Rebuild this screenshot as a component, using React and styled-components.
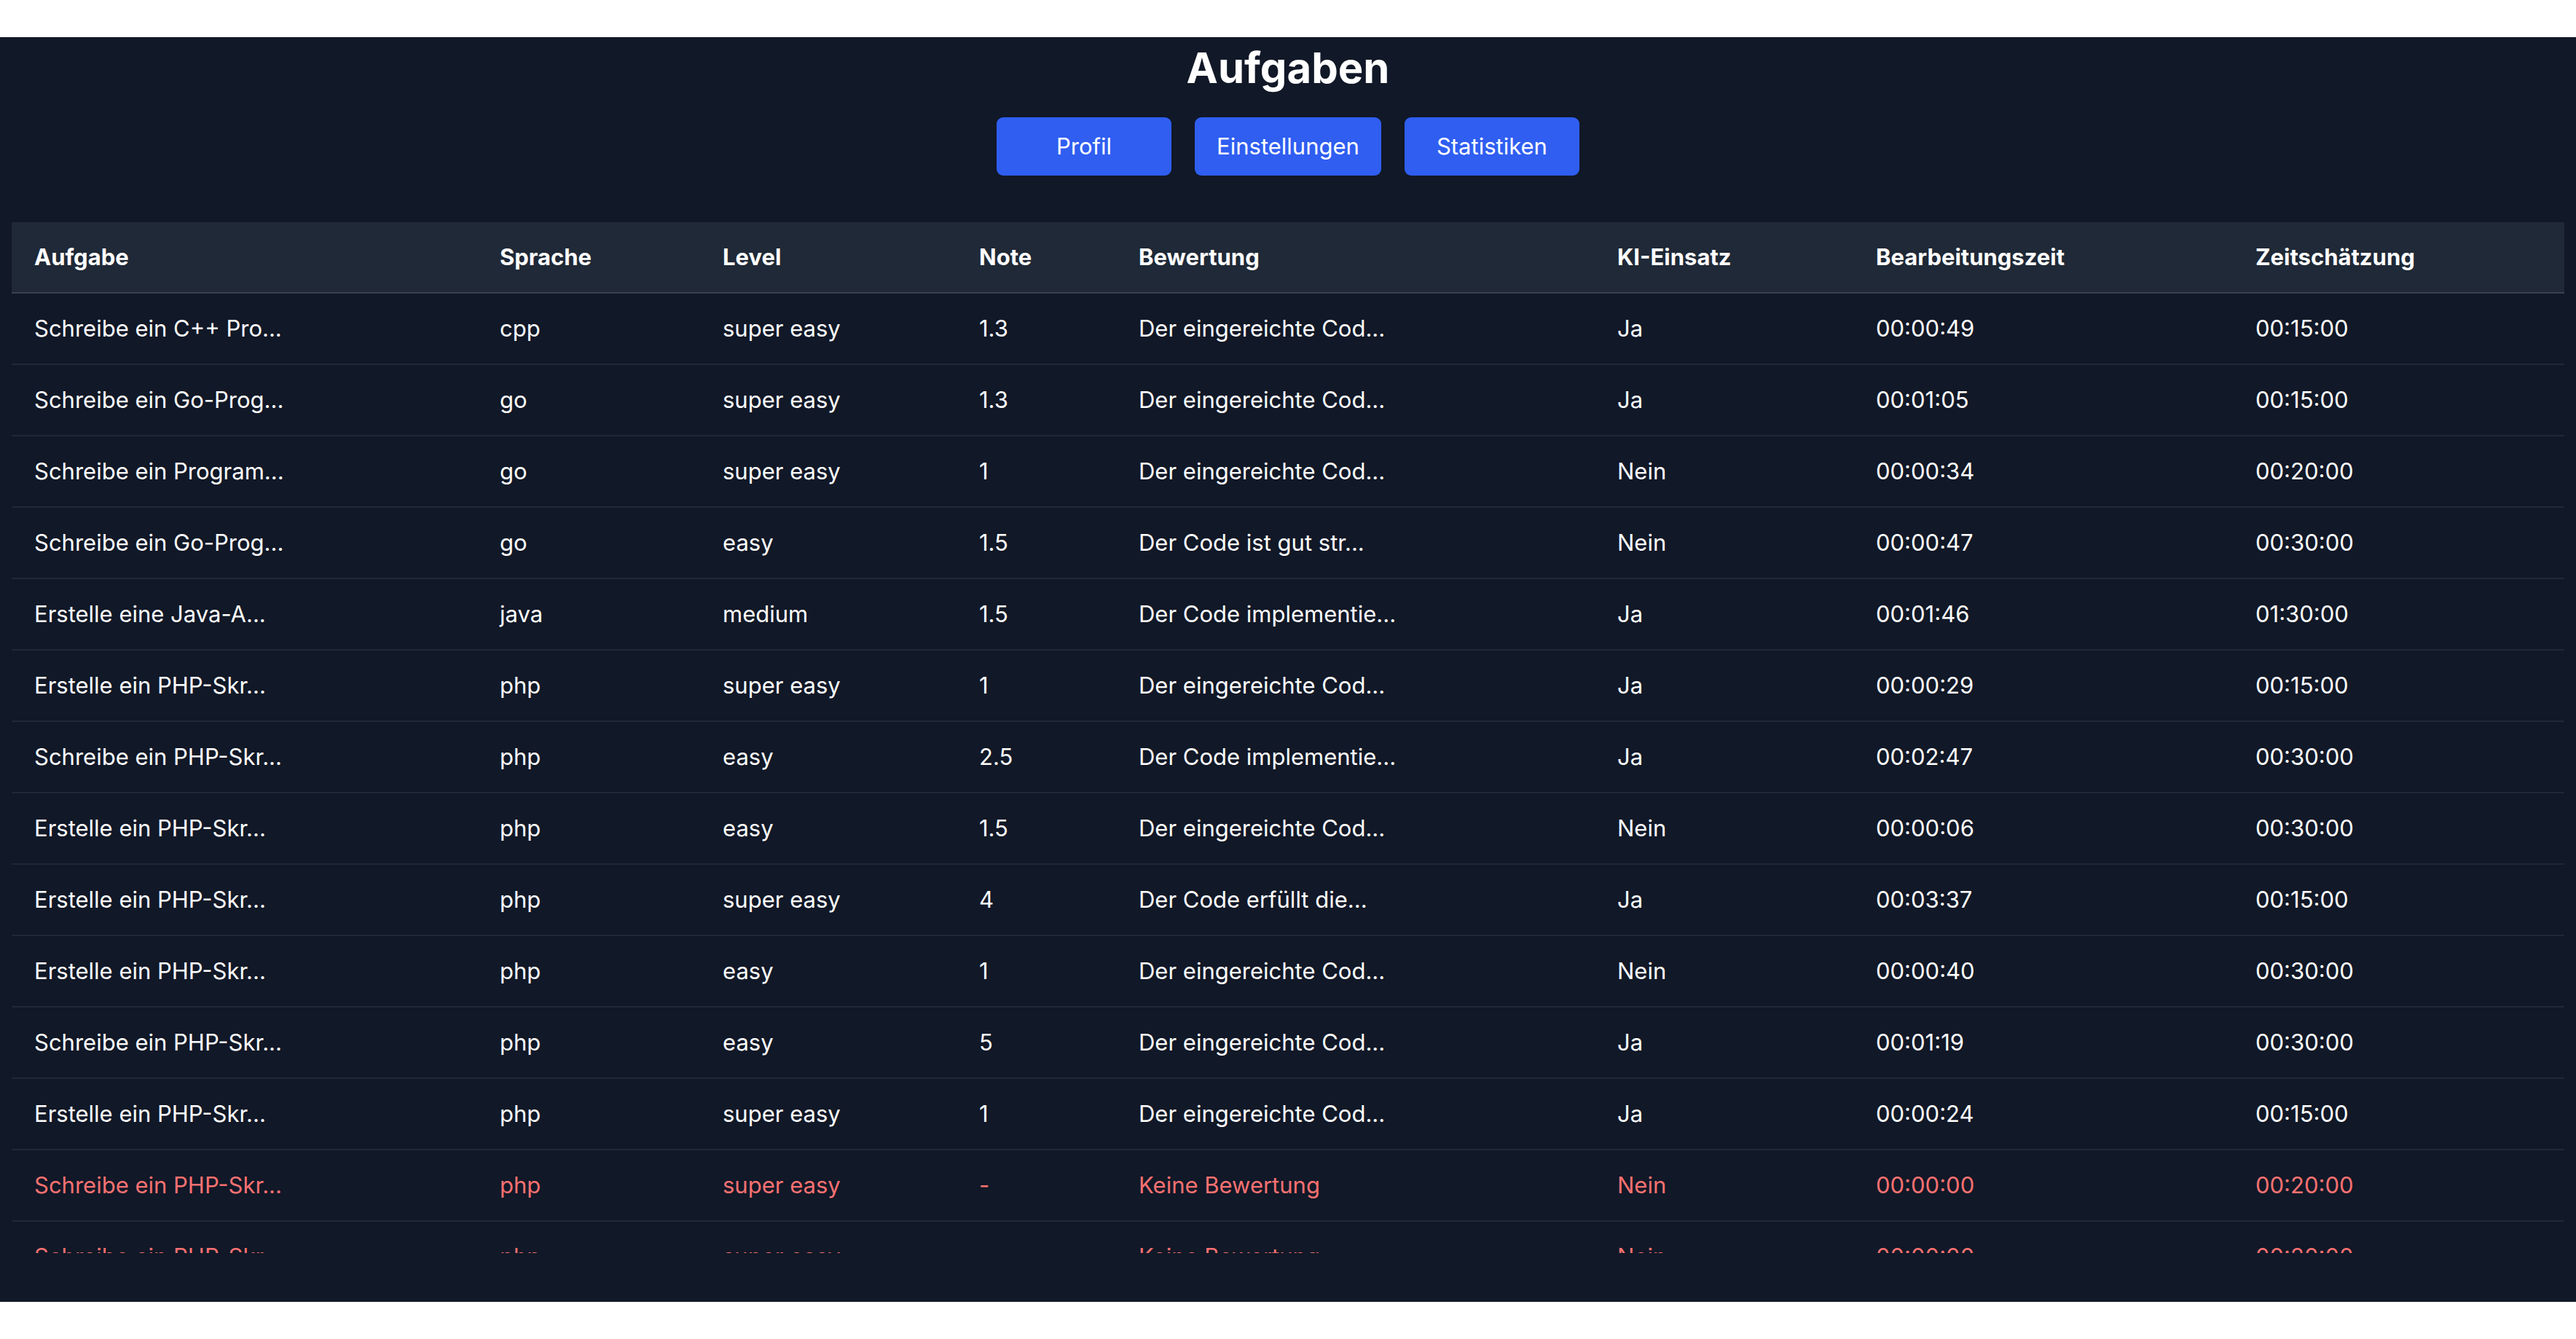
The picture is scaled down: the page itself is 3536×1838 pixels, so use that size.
import styled, { createGlobalStyle } from 'styled-components';

const GlobalStyle = createGlobalStyle`
  html, body {
    margin: 0;
    padding: 0;
    background: #ffffff;
    font-family: Inter, "Noto Sans", "Liberation Sans", sans-serif;
  }
`;

const Page = styled.div`
  margin-top: 51px;
  height: 1736px;
  background: #111827;
  color: #ffffff;
  display: flex;
  flex-direction: column;
  align-items: center;
  box-sizing: border-box;
  padding-bottom: 67px;
`;

const Title = styled.h1`
  margin: 8px 0 0;
  font-size: 58px;
  line-height: 1.2;
  font-weight: 700;
`;

const Toolbar = styled.div`
  display: flex;
  gap: 32px;
  margin-top: 32px;
`;

const NavButton = styled.button`
  min-width: 240px;
  height: 80px;
  padding: 0 30px;
  border: none;
  border-radius: 9px;
  background: #2f5ef1;
  color: #ffffff;
  font-family: inherit;
  font-size: 31px;
  cursor: pointer;
`;

const Scroller = styled.div`
  align-self: stretch;
  margin: 64px 16px 0;
  flex: 1;
  overflow-y: auto;
  scrollbar-width: none;

  &::-webkit-scrollbar {
    display: none;
  }
`;

const Table = styled.table`
  width: 100%;
  border-collapse: collapse;
  table-layout: fixed;
  font-size: 31px;
  line-height: 44px;
`;

const HeadCell = styled.th`
  background: #1f2937;
  border-bottom: 2px solid #374151;
  padding: 26px 31px;
  text-align: left;
  font-weight: 700;
  white-space: nowrap;
`;

const Row = styled.tr`
  color: ${(props) => (props.$missing ? '#f87171' : '#ffffff')};
`;

const Cell = styled.td`
  border-bottom: 2px solid #1f2937;
  padding: 26px 31px;
  white-space: nowrap;
  overflow: hidden;
`;

const columns = [
  { label: 'Aufgabe', width: 639 },
  { label: 'Sprache', width: 306 },
  { label: 'Level', width: 352 },
  { label: 'Note', width: 219 },
  { label: 'Bewertung', width: 657 },
  { label: 'KI-Einsatz', width: 355 },
  { label: 'Bearbeitungszeit', width: 521 },
  { label: 'Zeitschätzung', width: 455 },
];

const tasks = [
  ['Schreibe ein C++ Pro...', 'cpp', 'super easy', '1.3', 'Der eingereichte Cod...', 'Ja', '00:00:49', '00:15:00'],
  ['Schreibe ein Go-Prog...', 'go', 'super easy', '1.3', 'Der eingereichte Cod...', 'Ja', '00:01:05', '00:15:00'],
  ['Schreibe ein Program...', 'go', 'super easy', '1', 'Der eingereichte Cod...', 'Nein', '00:00:34', '00:20:00'],
  ['Schreibe ein Go-Prog...', 'go', 'easy', '1.5', 'Der Code ist gut str...', 'Nein', '00:00:47', '00:30:00'],
  ['Erstelle eine Java-A...', 'java', 'medium', '1.5', 'Der Code implementie...', 'Ja', '00:01:46', '01:30:00'],
  ['Erstelle ein PHP-Skr...', 'php', 'super easy', '1', 'Der eingereichte Cod...', 'Ja', '00:00:29', '00:15:00'],
  ['Schreibe ein PHP-Skr...', 'php', 'easy', '2.5', 'Der Code implementie...', 'Ja', '00:02:47', '00:30:00'],
  ['Erstelle ein PHP-Skr...', 'php', 'easy', '1.5', 'Der eingereichte Cod...', 'Nein', '00:00:06', '00:30:00'],
  ['Erstelle ein PHP-Skr...', 'php', 'super easy', '4', 'Der Code erfüllt die...', 'Ja', '00:03:37', '00:15:00'],
  ['Erstelle ein PHP-Skr...', 'php', 'easy', '1', 'Der eingereichte Cod...', 'Nein', '00:00:40', '00:30:00'],
  ['Schreibe ein PHP-Skr...', 'php', 'easy', '5', 'Der eingereichte Cod...', 'Ja', '00:01:19', '00:30:00'],
  ['Erstelle ein PHP-Skr...', 'php', 'super easy', '1', 'Der eingereichte Cod...', 'Ja', '00:00:24', '00:15:00'],
  ['Schreibe ein PHP-Skr...', 'php', 'super easy', '-', 'Keine Bewertung', 'Nein', '00:00:00', '00:20:00'],
  ['Schreibe ein PHP-Skr...', 'php', 'super easy', '-', 'Keine Bewertung', 'Nein', '00:00:00', '00:20:00'],
  ['Erstelle ein PHP-Skr...', 'php', 'easy', '-', 'Keine Bewertung', 'Nein', '00:00:00', '00:30:00'],
];

export default function App() {
  return (
    <>
      <GlobalStyle />
      <Page>
        <Title>Aufgaben</Title>
        <Toolbar>
          <NavButton>Profil</NavButton>
          <NavButton>Einstellungen</NavButton>
          <NavButton>Statistiken</NavButton>
        </Toolbar>
        <Scroller>
          <Table>
            <colgroup>
              {columns.map((c) => (
                <col key={c.label} style={{ width: c.width }} />
              ))}
            </colgroup>
            <thead>
              <tr>
                {columns.map((c) => (
                  <HeadCell key={c.label}>{c.label}</HeadCell>
                ))}
              </tr>
            </thead>
            <tbody>
              {tasks.map((t, i) => (
                <Row key={i} $missing={t[3] === '-'}>
                  {t.map((v, j) => (
                    <Cell key={j}>{v}</Cell>
                  ))}
                </Row>
              ))}
            </tbody>
          </Table>
        </Scroller>
      </Page>
    </>
  );
}
